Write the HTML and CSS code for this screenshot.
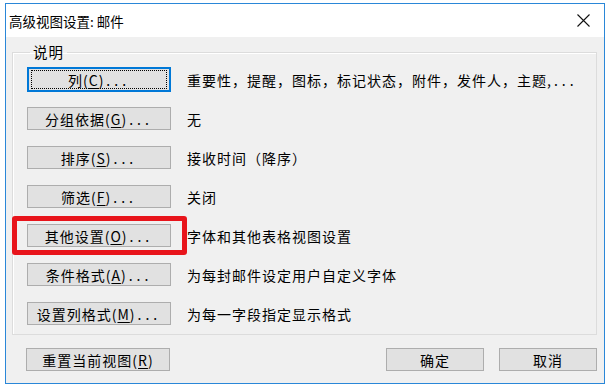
FILE: index.html
```html
<!DOCTYPE html>
<html lang="zh-CN">
<head>
    <meta charset="UTF-8">
    <title>高级视图设置: 邮件</title>
    <link rel="stylesheet" href="styles.css">
</head>
<body>

<div class="window">
    <div class="titlebar">
        <span class="title">高级视图设置: 邮件</span>
        <span class="close">
            <svg width="13" height="13" viewBox="0 0 13 13"><path d="M0.5 0.5 L12.5 12.5 M12.5 0.5 L0.5 12.5" stroke="#111" stroke-width="1.1" fill="none"/></svg>
        </span>
    </div>

    <div class="content">
        <fieldset class="group">
            <legend>说明</legend>
            <div class="rows">
                <div class="row">
                    <button class="btn focused"><span class="focus-ring">列(<u>C</u>)<span class="dots">...</span></span></button>
                    <span class="desc">重要性，提醒，图标，标记状态，附件，发件人，主题,<span class="dots">...</span></span>
                </div>
                <div class="row">
                    <button class="btn">分组依据(<u>G</u>)<span class="dots">...</span></button>
                    <span class="desc">无</span>
                </div>
                <div class="row">
                    <button class="btn">排序(<u>S</u>)<span class="dots">...</span></button>
                    <span class="desc">接收时间（降序）</span>
                </div>
                <div class="row">
                    <button class="btn">筛选(<u>F</u>)<span class="dots">...</span></button>
                    <span class="desc">关闭</span>
                </div>
                <div class="row marked">
                    <button class="btn">其他设置(<u>O</u>)<span class="dots">...</span></button>
                    <span class="desc">字体和其他表格视图设置</span>
                </div>
                <div class="row">
                    <button class="btn">条件格式(<u>A</u>)<span class="dots">...</span></button>
                    <span class="desc">为每封邮件设定用户自定义字体</span>
                </div>
                <div class="row">
                    <button class="btn">设置列格式(<u>M</u>)<span class="dots">...</span></button>
                    <span class="desc">为每一字段指定显示格式</span>
                </div>
            </div>
        </fieldset>

        <div class="footer">
            <button class="btn reset">重置当前视图(<u>R</u>)</button>
            <div class="spacer"></div>
            <button class="btn small">确定</button>
            <button class="btn small">取消</button>
        </div>
    </div>
</div>

</body>
</html>
```

FILE: styles.css
```css
body { margin: 0; background: #fff; font-family: "Noto Sans CJK SC", "Noto Sans", sans-serif; color: #000; }

.window { margin: 3px 0 0 5px; width: 598px; height: 379px; border: 1px solid #2a87d8; display: flex; flex-direction: column; background: #f0f0f0; }

.titlebar { background: #fff; height: 33px; display: flex; align-items: center; justify-content: space-between; padding: 0 14px 0 3px; }
.title { font-size: 13.5px; }
.close { display: flex; }

.content { flex: 1; padding: 6px 7px 0 6px; display: flex; flex-direction: column; }

.group { margin: 0; border: 1px solid #dcdcdc; box-shadow: inset 1px 1px 0 #fff; padding: 7px 14px 9px 14px; }
.group legend { font-size: 14.5px; padding: 0 3px; margin-left: 3px; line-height: 18px; letter-spacing: 1px; }

.rows { display: flex; flex-direction: column; gap: 16px; }
.row { display: flex; align-items: center; gap: 16px; position: relative; }

.btn { font-family: inherit; font-size: 14px; letter-spacing: 1px; background: #e1e1e1; border: 1px solid #adadad; height: 23px; padding: 0; color: #000; display: flex; align-items: center; justify-content: center; }
.row .btn { width: 144px; }
.btn u { text-underline-offset: 2px; }
.dots { letter-spacing: 4px; margin-left: 2px; }

.focused { border: 2px solid #0078d7; height: 25px; margin: -1px 0; }
.focus-ring { display: flex; align-items: center; justify-content: center; width: 134px; height: 17px; border: 1px dotted #000; }

.desc { font-size: 14px; letter-spacing: 1px; white-space: nowrap; }

.marked::before { content: ""; position: absolute; left: -15px; top: -8px; width: 165px; height: 29px; border: 5px solid #e8141b; border-radius: 3px; }

.footer { display: flex; gap: 15px; padding: 13px 0 0 14px; }
.footer .reset { width: 144px; }
.footer .small { width: 98px; }
.spacer { flex: 1; }
```
